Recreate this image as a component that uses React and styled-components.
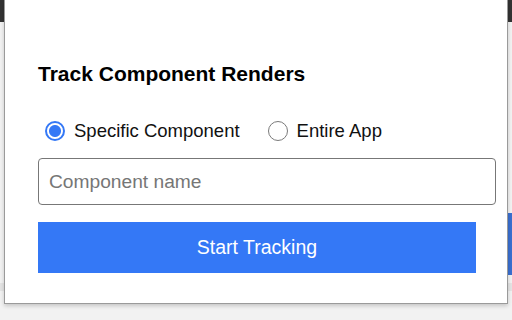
import React, { useState } from "react";
import styled, { createGlobalStyle } from "styled-components";

const GlobalStyle = createGlobalStyle`
    html, body {
        margin: 0;
        padding: 0;
        width: 512px;
        height: 320px;
        overflow: hidden;
        background: #eeeeee;
        font-family: "Liberation Sans", Arial, Helvetica, sans-serif;
    }
`;

const Backdrop = styled.div`
    position: relative;
    width: 512px;
    height: 320px;
    display: flex;
    flex-direction: column;
`;

const BackHeader = styled.div`
    height: 22px;
    background: #333333;
`;

const BackBody = styled.div`
    flex: 1;
    display: flex;
    flex-direction: column;
    align-items: flex-end;
    background: #f2f2f2;
`;

const BackButton = styled.div`
    margin-top: 191px;
    width: 24px;
    height: 62px;
    background: #3a6fd0;
`;

const BackRule = styled.div`
    margin-top: 8px;
    width: 100%;
    height: 8px;
    background: #e4e4e4;
`;

const Popup = styled.div`
    position: absolute;
    left: 4px;
    top: -1px;
    width: 504px;
    height: 305px;
    box-sizing: border-box;
    background: #ffffff;
    border: 1px solid #9a9a9a;
    box-shadow: 0 2px 4px rgba(0, 0, 0, 0.18);
    padding: 62px 31px 0 33px;
    display: flex;
    flex-direction: column;
`;

const Title = styled.h3`
    margin: 0;
    font-size: 21px;
    line-height: 24px;
    font-weight: 700;
    color: #000000;
`;

const RadioRow = styled.div`
    margin-top: 34px;
    display: flex;
    align-items: center;
    height: 22px;
    padding-left: 7px;
`;

const RadioLabel = styled.label`
    display: flex;
    align-items: center;
    gap: 9px;
    font-size: 18.5px;
    line-height: 22px;
    color: #111111;
    cursor: pointer;
    & + & {
        margin-left: 28px;
    }
`;

const RadioDot = styled.span`
    box-sizing: border-box;
    width: 20px;
    height: 20px;
    border-radius: 50%;
    border: ${({ $checked }) => ($checked ? "2px solid #3478f6" : "1.5px solid #7a7a7a")};
    background: ${({ $checked }) =>
        $checked ? "radial-gradient(circle, #3478f6 0 5.5px, #ffffff 6.5px)" : "#ffffff"};
`;

const HiddenInput = styled.input`
    display: none;
`;

const NameInput = styled.input`
    margin-top: 16px;
    box-sizing: content-box;
    width: calc(100% - 2px);
    height: 45px;
    padding: 0 10px;
    border: 1px solid #777777;
    border-radius: 4px;
    font-family: "Liberation Sans", Arial, sans-serif;
    font-size: 19.2px;
    color: #222222;
    outline: none;
    &::placeholder {
        color: #767676;
    }
`;

const StartButton = styled.button`
    margin-top: 17px;
    width: 100%;
    height: 51px;
    border: none;
    border-radius: 0;
    background: #3478f6;
    color: #ffffff;
    font-family: "Liberation Sans", Arial, sans-serif;
    font-size: 19.5px;
    cursor: pointer;
`;

export default function App() {
    const [mode, setMode] = useState("component");

    return (
        <>
            <GlobalStyle />
            <Backdrop>
                <BackHeader />
                <BackBody>
                    <BackButton />
                    <BackRule />
                </BackBody>
                <Popup>
                    <Title>Track Component Renders</Title>
                    <RadioRow>
                        <RadioLabel>
                            <HiddenInput type="radio" name="mode" checked={mode === "component"} onChange={() => setMode("component")} />
                            <RadioDot $checked={mode === "component"} />
                            Specific Component
                        </RadioLabel>
                        <RadioLabel>
                            <HiddenInput type="radio" name="mode" checked={mode === "app"} onChange={() => setMode("app")} />
                            <RadioDot $checked={mode === "app"} />
                            Entire App
                        </RadioLabel>
                    </RadioRow>
                    <NameInput placeholder="Component name" />
                    <StartButton>Start Tracking</StartButton>
                </Popup>
            </Backdrop>
        </>
    );
}
